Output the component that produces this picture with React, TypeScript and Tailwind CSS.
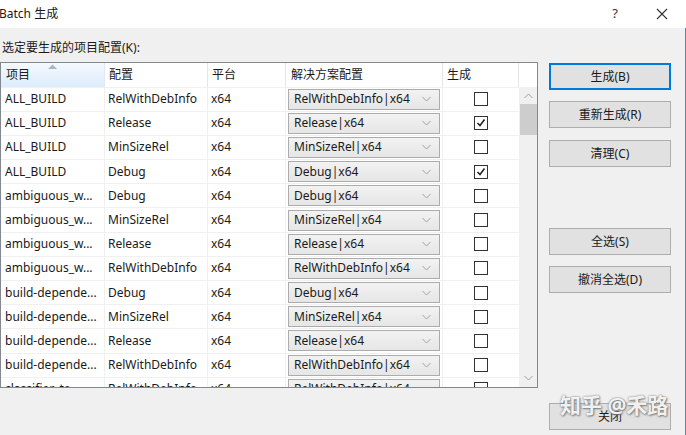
import React from 'react';

type Row = { project: string; config: string; checked: boolean };

const ROWS: Row[] = [
  { project: 'ALL_BUILD', config: 'RelWithDebInfo', checked: false },
  { project: 'ALL_BUILD', config: 'Release', checked: true },
  { project: 'ALL_BUILD', config: 'MinSizeRel', checked: false },
  { project: 'ALL_BUILD', config: 'Debug', checked: true },
  { project: 'ambiguous_w...', config: 'Debug', checked: false },
  { project: 'ambiguous_w...', config: 'MinSizeRel', checked: false },
  { project: 'ambiguous_w...', config: 'Release', checked: false },
  { project: 'ambiguous_w...', config: 'RelWithDebInfo', checked: false },
  { project: 'build-depende...', config: 'Debug', checked: false },
  { project: 'build-depende...', config: 'MinSizeRel', checked: false },
  { project: 'build-depende...', config: 'Release', checked: false },
  { project: 'build-depende...', config: 'RelWithDebInfo', checked: false },
  { project: 'classifier_te...', config: 'RelWithDebInfo', checked: false },
];

const FONT = '"Noto Sans", "Noto Sans CJK SC", sans-serif';

function Chevron({ up }: { up?: boolean }) {
  return (
    <svg width="9" height="6" viewBox="0 0 9 6" className="block">
      <path
        d={up ? 'M0.5 5 L4.5 1 L8.5 5' : 'M0.5 1 L4.5 5 L8.5 1'}
        fill="none"
        stroke="#a0a0a0"
        strokeWidth="1"
      />
    </svg>
  );
}

function Checkbox({ checked }: { checked: boolean }) {
  return (
    <div className="w-[14px] h-[14px] border border-[#333333] bg-white flex items-center justify-center">
      {checked && (
        <svg width="10" height="10" viewBox="0 0 10 10">
          <path d="M1.5 5 L4 7.5 L8.5 1.5" fill="none" stroke="#222" strokeWidth="1.6" />
        </svg>
      )}
    </div>
  );
}

function Dropdown({ value }: { value: string }) {
  return (
    <div className="w-[152px] h-[21px] border border-[#acacac] bg-gradient-to-b from-[#f2f2f2] to-[#e6e6e6] flex items-center justify-between pl-[5px] pr-[8px]">
      <span className="text-[12px] text-[#1a1a1a] leading-none">{value}</span>
      <Chevron />
    </div>
  );
}

function Button({ label, primary, className }: { label: string; primary?: boolean; className?: string }) {
  return (
    <div
      className={`w-[122px] h-[27px] flex items-center justify-center bg-[#e1e1e1] text-[12px] text-[#1a1a1a] ${
        primary ? 'border-2 border-[#0078d7]' : 'border border-[#adadad]'
      } ${className ?? ''}`}
    >
      {label}
    </div>
  );
}

export default function App() {
  return (
    <div className="w-[686px] h-[435px] overflow-hidden flex flex-col bg-[#f0f0f0]" style={{ fontFamily: FONT }}>
      {/* Title bar */}
      <div className="h-[28px] bg-white flex items-center shrink-0">
        <span className="text-[12px] text-[#1a1a1a] -ml-[1px]">Batch 生成</span>
        <div className="flex-1" />
        <span className="text-[13px] text-[#333] mr-[38px]">?</span>
        <svg width="12" height="12" viewBox="0 0 12 12" className="mr-[18px]">
          <path d="M1 1 L11 11 M11 1 L1 11" stroke="#333" strokeWidth="1.1" />
        </svg>
      </div>

      {/* Body */}
      <div className="flex-1 flex flex-col border-r border-[#3c87d6] relative">
        <div className="h-[34px] flex items-center pl-[2px] pt-[6px]">
          <span className="text-[12px] text-[#1a1a1a]">选定要生成的项目配置(K):</span>
        </div>

        <div className="flex">
          {/* List */}
          <div className="w-[538px] h-[326px] border border-[#828790] bg-white flex overflow-hidden">
            <div className="w-[518px] flex flex-col">
              {/* Header */}
              <div className="h-[24.5px] shrink-0 flex text-[12px] text-[#1a1a1a] border-b border-[#f0f0f0]">
                <div className="w-[104px] relative bg-gradient-to-b from-[#f4f9fd] to-[#dcecfc] border-r border-[#e3e8ee] flex items-center pl-[5px]">
                  <svg width="9" height="5" viewBox="0 0 9 5" className="absolute left-[47px] top-[1px]">
                    <path d="M0 5 L4.5 0.5 L9 5 Z" fill="#a7b5c4" />
                  </svg>
                  项目
                </div>
                <div className="w-[103px] border-r border-[#e5e5e5] flex items-center pl-[4px]">配置</div>
                <div className="w-[78px] border-r border-[#e5e5e5] flex items-center pl-[4px]">平台</div>
                <div className="w-[157px] border-r border-[#e5e5e5] flex items-center pl-[5px]">解决方案配置</div>
                <div className="w-[76px] border-r border-[#e5e5e5] flex items-center pl-[4px]">生成</div>
              </div>

              {/* Rows */}
              {ROWS.map((r, i) => (
                <div key={i} className="h-[24.2px] shrink-0 flex text-[12px] text-[#1a1a1a] border-b border-[#f0f0f0]">
                  <div className="w-[104px] border-r border-[#f0f0f0] flex items-center pl-[4px] whitespace-nowrap">
                    {r.project}
                  </div>
                  <div className="w-[103px] border-r border-[#f0f0f0] flex items-center pl-[3px] whitespace-nowrap">
                    {r.config}
                  </div>
                  <div className="w-[78px] border-r border-[#f0f0f0] flex items-center pl-[3px]">x64</div>
                  <div className="w-[157px] border-r border-[#f0f0f0] flex items-center pl-[2px]">
                    <Dropdown value={`${r.config}|x64`} />
                  </div>
                  <div className="w-[76px] flex items-center justify-center">
                    <Checkbox checked={r.checked} />
                  </div>
                </div>
              ))}
            </div>

            {/* Scrollbar */}
            <div className="w-[18px] bg-[#f0f0f0] flex flex-col items-center">
              <div className="h-[24px] w-full bg-white" />
              <div className="h-[17px] flex items-center justify-center">
                <Chevron up />
              </div>
              <div className="w-[17px] h-[31px] bg-[#cdcdcd]" />
              <div className="flex-1" />
              <div className="h-[17px] flex items-center justify-center mb-[1px]">
                <Chevron />
              </div>
            </div>
          </div>

          {/* Buttons */}
          <div className="flex flex-col ml-[11px] pt-[1px]">
            <Button label="生成(B)" primary />
            <Button label="重新生成(R)" className="mt-[11px]" />
            <Button label="清理(C)" className="mt-[12px]" />
            <Button label="全选(S)" className="mt-[61px]" />
            <Button label="撤消全选(D)" className="mt-[11px]" />
          </div>
        </div>

        <div className="flex justify-end pr-[14px] pt-[15px]">
          <Button label="关闭" />
        </div>

        {/* Watermark */}
        <div
          className="absolute left-[560px] top-[362px] text-[21px] font-bold text-white/90 pointer-events-none"
          style={{ textShadow: '0 0 2px #666, 1px 1px 2px #888' }}
        >
          知乎 @禾路
        </div>
      </div>
    </div>
  );
}
